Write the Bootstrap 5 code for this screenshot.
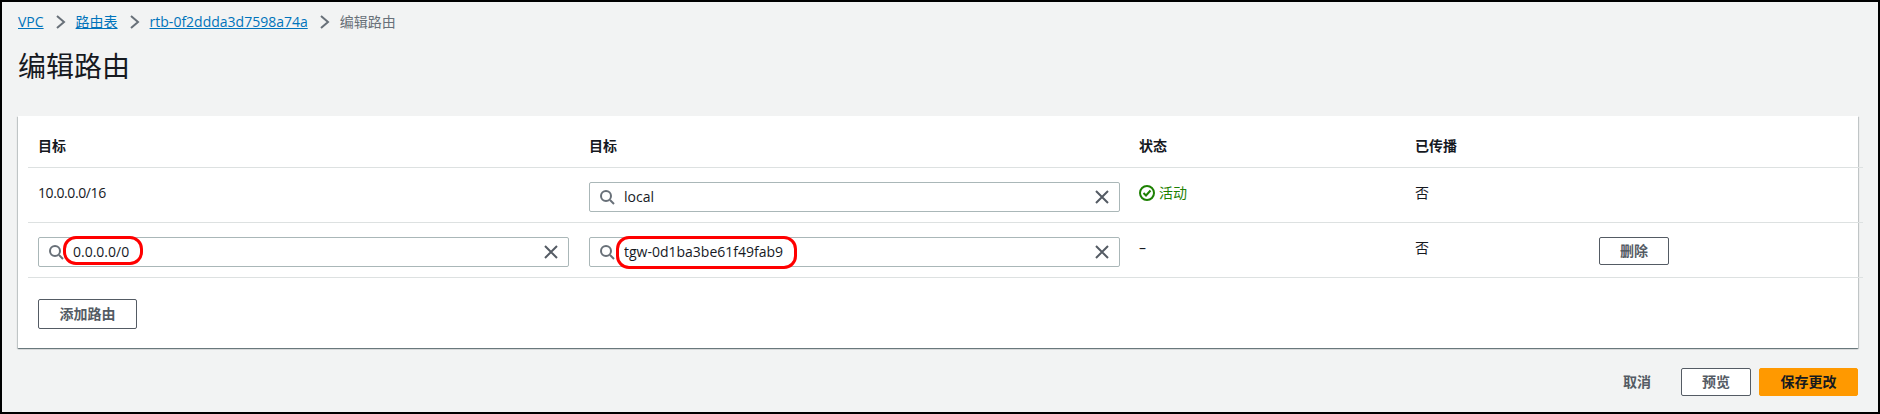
<!DOCTYPE html>
<html lang="zh">
<head>
  <meta charset="UTF-8" />
  <title>编辑路由</title>
  <link href="https://cdn.jsdelivr.net/npm/bootstrap@5.3.3/dist/css/bootstrap.min.css" rel="stylesheet">
  <style>
    html, body { height: 100%; margin: 0; overflow: hidden; }
    body {
      background: #f2f3f3;
      color: #16191f;
      font-family: "Open Sans", "Noto Sans CJK SC", sans-serif;
      font-size: 14px;
      line-height: 20px;
    }
    #page {
      height: 414px;
      border: 2px solid #000;
      padding: 0 20px 0 16px;
    }
    .crumbs { height: 40px; margin: 0; font-size: 14px; align-items: center; }
    .crumbs a { color: #0073bb; }
    .crumbs .sep { margin: 0 10px; display: flex; }
    .crumbs .here { color: #687078; }
    h1.page-title {
      font-size: 28px; line-height: 36px; font-weight: 400;
      margin: 6px 0 0; height: 68px; color: #16191f;
    }
    .route-panel {
      height: 232px;
      background: #fff;
      border: 0;
      border-radius: 0;
      box-shadow: 0 1px 1px 0 rgba(0,28,36,.4), 1px 1px 1px 0 rgba(0,28,36,.15), -1px 1px 1px 0 rgba(0,28,36,.15);
      padding-left: 10px;
    }
    .route-table { width: 1835px; table-layout: fixed; margin: 0; }
    .route-table th, .route-table td {
      padding: 0 0 0 10px;
      border-bottom: 1px solid #dde1e1;
      color: #16191f;
      font-size: 14px;
    }
    .route-table thead th { height: 51px; font-weight: 700; padding-top: 10px; vertical-align: middle; }
    .route-table tbody td { height: 55px; padding-top: 14px; vertical-align: top; }
    .w-a { width: 551px; } .w-b { width: 550px; } .w-c { width: 276px; } .w-d { width: 184px; }
    .cell-text { display: block; padding-top: 1px; }
    .cidr-text { letter-spacing: -.4px; }
    .route-field { width: 531px; height: 30px; }
    .route-field .form-control {
      height: 30px; padding: 0 34px; border: 1px solid #aab7b8; border-radius: 2px;
      font-size: 14px; color: #16191f; box-shadow: none;
    }
    .ico-search { position: absolute; left: 10px; top: 7px; }
    .ico-clear { position: absolute; right: 10px; top: 7px; }
    .ring {
      position: absolute; border: 3.5px solid #f00; border-radius: 13px; pointer-events: none;
    }
    .ring-a { left: 25px; top: -1px; width: 80px; height: 29px; }
    .ring-b { left: 27px; top: -1px; width: 181px; height: 33px; }
    .btn-aws {
      font-size: 14px; font-weight: 700; line-height: 18px; color: #545b64;
      background: #fff; border: 1px solid #545b64; border-radius: 2px;
      padding: 4px 0; width: 70px; height: 28px;
    }
    .btn-add { width: 99px; height: 30px; padding: 5px 0; }
    .add-row { padding: 21px 0 0 10px; }
    .foot { padding-top: 20px; gap: 8px; }
    .foot .cancel {
      font-size: 14px; font-weight: 700; color: #545b64; margin-right: 22px;
      line-height: 28px;
    }
    .btn-save {
      background: #ff9900; border-color: #ff9900; color: #16191f; width: 99px;
    }
    .ok-text { color: #1d8102; }
  </style>
</head>
<body>
<div id="page" class="d-flex flex-column">
  <nav class="crumbs d-flex">
    <a href="#">VPC</a>
    <span class="sep"><svg width="12" height="16" viewBox="0 0 12 16"><path d="M3 2l7 6-7 6" fill="none" stroke="#687078" stroke-width="2"/></svg></span>
    <a href="#">路由表</a>
    <span class="sep"><svg width="12" height="16" viewBox="0 0 12 16"><path d="M3 2l7 6-7 6" fill="none" stroke="#687078" stroke-width="2"/></svg></span>
    <a href="#">rtb-0f2ddda3d7598a74a</a>
    <span class="sep"><svg width="12" height="16" viewBox="0 0 12 16"><path d="M3 2l7 6-7 6" fill="none" stroke="#687078" stroke-width="2"/></svg></span>
    <span class="here">编辑路由</span>
  </nav>
  <h1 class="page-title">编辑路由</h1>
  <div class="card route-panel">
    <table class="table route-table">
      <colgroup><col class="w-a"><col class="w-b"><col class="w-c"><col class="w-d"><col></colgroup>
      <thead>
        <tr><th>目标</th><th>目标</th><th>状态</th><th>已传播</th><th></th></tr>
      </thead>
      <tbody>
        <tr>
          <td><span class="cell-text cidr-text">10.0.0.0/16</span></td>
          <td>
            <div class="route-field position-relative">
              <svg class="ico-search" width="16" height="16" viewBox="0 0 16 16"><circle cx="7" cy="7" r="5" fill="none" stroke="#687078" stroke-width="2"/><path d="M11 11l4 4" stroke="#687078" stroke-width="2"/></svg>
              <input class="form-control" value="local">
              <svg class="ico-clear" width="16" height="16" viewBox="0 0 16 16"><path d="M2 2l12 12M14 2L2 14" stroke="#545b64" stroke-width="2"/></svg>
            </div>
          </td>
          <td>
            <span class="cell-text d-flex align-items-center gap-1 ok-text">
              <svg width="16" height="16" viewBox="0 0 16 16"><circle cx="8" cy="8" r="7" fill="none" stroke="#1d8102" stroke-width="2"/><path d="M4.5 8l2.5 2.5L11.5 5.5" fill="none" stroke="#1d8102" stroke-width="2"/></svg>活动
            </span>
          </td>
          <td><span class="cell-text">否</span></td>
          <td></td>
        </tr>
        <tr>
          <td>
            <div class="route-field position-relative">
              <svg class="ico-search" width="16" height="16" viewBox="0 0 16 16"><circle cx="7" cy="7" r="5" fill="none" stroke="#687078" stroke-width="2"/><path d="M11 11l4 4" stroke="#687078" stroke-width="2"/></svg>
              <input class="form-control" value="0.0.0.0/0">
              <svg class="ico-clear" width="16" height="16" viewBox="0 0 16 16"><path d="M2 2l12 12M14 2L2 14" stroke="#545b64" stroke-width="2"/></svg>
              <div class="ring ring-a"></div>
            </div>
          </td>
          <td>
            <div class="route-field position-relative">
              <svg class="ico-search" width="16" height="16" viewBox="0 0 16 16"><circle cx="7" cy="7" r="5" fill="none" stroke="#687078" stroke-width="2"/><path d="M11 11l4 4" stroke="#687078" stroke-width="2"/></svg>
              <input class="form-control" value="tgw-0d1ba3be61f49fab9">
              <svg class="ico-clear" width="16" height="16" viewBox="0 0 16 16"><path d="M2 2l12 12M14 2L2 14" stroke="#545b64" stroke-width="2"/></svg>
              <div class="ring ring-b"></div>
            </div>
          </td>
          <td><span class="cell-text">–</span></td>
          <td><span class="cell-text">否</span></td>
          <td><button class="btn btn-aws">删除</button></td>
        </tr>
      </tbody>
    </table>
    <div class="add-row"><button class="btn btn-aws btn-add">添加路由</button></div>
  </div>
  <div class="foot d-flex justify-content-end align-items-start">
    <span class="cancel">取消</span>
    <button class="btn btn-aws">预览</button>
    <button class="btn btn-aws btn-save">保存更改</button>
  </div>
</div>
<script src="https://cdn.jsdelivr.net/npm/bootstrap@5.3.3/dist/js/bootstrap.bundle.min.js"></script>
</body>
</html>
